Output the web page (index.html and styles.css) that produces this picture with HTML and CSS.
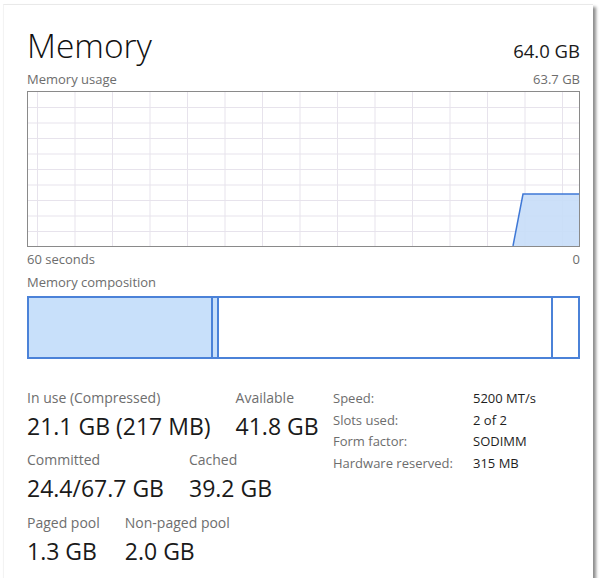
FILE: index.html
```html
<!DOCTYPE html>
<html lang="en">
<head>
<meta charset="utf-8">
<title>Memory</title>
<link rel="stylesheet" href="styles.css">
</head>
<body>
<div class="panel">
  <div class="head">
    <h1 class="title">Memory</h1>
    <div class="total">64.0 GB</div>
  </div>
  <div class="axis">
    <span>Memory usage</span>
    <span>63.7 GB</span>
  </div>
  <div class="graph">
    <svg class="grid" viewBox="0 0 551 154" width="551" height="154">
      <g stroke="#e7e3ec" stroke-width="1">
        <line x1="9.5" y1="0" x2="9.5" y2="154"/>
        <line x1="47" y1="0" x2="47" y2="154"/>
        <line x1="84.5" y1="0" x2="84.5" y2="154"/>
        <line x1="122" y1="0" x2="122" y2="154"/>
        <line x1="159.5" y1="0" x2="159.5" y2="154"/>
        <line x1="197" y1="0" x2="197" y2="154"/>
        <line x1="234.5" y1="0" x2="234.5" y2="154"/>
        <line x1="272" y1="0" x2="272" y2="154"/>
        <line x1="309.5" y1="0" x2="309.5" y2="154"/>
        <line x1="347" y1="0" x2="347" y2="154"/>
        <line x1="384.5" y1="0" x2="384.5" y2="154"/>
        <line x1="422" y1="0" x2="422" y2="154"/>
        <line x1="459.5" y1="0" x2="459.5" y2="154"/>
        <line x1="497" y1="0" x2="497" y2="154"/>
        <line x1="534.5" y1="0" x2="534.5" y2="154"/>
        <line x1="0" y1="15.5" x2="551" y2="15.5"/>
        <line x1="0" y1="31" x2="551" y2="31"/>
        <line x1="0" y1="46.5" x2="551" y2="46.5"/>
        <line x1="0" y1="62" x2="551" y2="62"/>
        <line x1="0" y1="77.5" x2="551" y2="77.5"/>
        <line x1="0" y1="93" x2="551" y2="93"/>
        <line x1="0" y1="108.5" x2="551" y2="108.5"/>
        <line x1="0" y1="124" x2="551" y2="124"/>
        <line x1="0" y1="139.5" x2="551" y2="139.5"/>
      </g>
      <path d="M485 154 L495 102 L551 102 L551 154 Z" fill="#c6ddf8" fill-opacity="0.9"/>
      <polyline points="485,154 495,102 551,102" fill="none" stroke="#3f78d6" stroke-width="1.5"/>
    </svg>
  </div>
  <div class="axis">
    <span>60 seconds</span>
    <span>0</span>
  </div>
  <div class="caption">Memory composition</div>
  <div class="comp">
    <div class="seg seg-inuse"></div>
    <div class="seg seg-modified"></div>
    <div class="seg seg-standby"></div>
    <div class="seg seg-free"></div>
  </div>
  <div class="stats">
    <div class="figures">
      <div class="row">
        <div class="stat"><div class="label">In use (Compressed)</div><div class="value">21.1 GB (217 MB)</div></div>
        <div class="stat"><div class="label">Available</div><div class="value">41.8 GB</div></div>
      </div>
      <div class="row">
        <div class="stat"><div class="label">Committed</div><div class="value">24.4/67.7 GB</div></div>
        <div class="stat"><div class="label">Cached</div><div class="value">39.2 GB</div></div>
      </div>
      <div class="row">
        <div class="stat"><div class="label">Paged pool</div><div class="value">1.3 GB</div></div>
        <div class="stat"><div class="label">Non-paged pool</div><div class="value">2.0 GB</div></div>
      </div>
    </div>
    <dl class="info">
      <dt>Speed:</dt><dd>5200 MT/s</dd>
      <dt>Slots used:</dt><dd>2 of 2</dd>
      <dt>Form factor:</dt><dd>SODIMM</dd>
      <dt>Hardware reserved:</dt><dd>315 MB</dd>
    </dl>
  </div>
</div>
</body>
</html>
```
FILE: styles.css
```css
* { box-sizing: border-box; }

html, body {
  margin: 0;
  padding: 0;
  background: #ffffff;
}

body {
  font-family: "Open Sans", "Noto Sans", "Liberation Sans", sans-serif;
  color: #1a1a1a;
}

.panel {
  margin: 4px 0 0 3px;
  width: 590px;
  height: 574px;
  background: #ffffff;
  border-top: 1px solid #e9e9e9;
  border-left: 1px solid #f3f3f3;
  box-shadow: 3px 3px 3px rgba(0, 0, 0, 0.45);
  padding: 19.5px 13px 0 23px;
}

.head {
  display: flex;
  justify-content: space-between;
  align-items: baseline;
  height: 40px;
}

.title {
  margin: 0;
  font-size: 33.5px;
  font-weight: 300;
  line-height: 40px;
  color: #111111;
}

.total {
  font-size: 18.5px;
  color: #1a1a1a;
}

.axis {
  display: flex;
  justify-content: space-between;
  font-size: 13px;
  line-height: 16px;
  color: #6d6d6d;
  margin-top: 6.5px;
}

.graph {
  margin-top: 4px;
  width: 553px;
  height: 156px;
  border: 1px solid #8a8a8a;
}

.grid {
  display: block;
}

.graph + .axis {
  margin-top: 4px;
}

.caption {
  font-size: 13px;
  line-height: 16px;
  color: #6d6d6d;
  margin-top: 7px;
}

.comp {
  margin-top: 6px;
  width: 553px;
  height: 63px;
  border: 2px solid #4b82d8;
  display: flex;
}

.seg {
  height: 100%;
  border-right: 2px solid #4b82d8;
}

.seg-inuse { width: 184px; background: #c8e0fa; }
.seg-modified { width: 6px; background: #c8e0fa; }
.seg-standby { width: 334px; background: #ffffff; }
.seg-free { flex: 1; border-right: 0; background: #ffffff; }

.stats {
  margin-top: 28px;
  display: flex;
}

.figures {
  width: 306px;
  padding-top: 1.6px;
  display: flex;
  flex-direction: column;
  row-gap: 11.5px;
}

.row {
  display: flex;
  column-gap: 25px;
}

.label {
  font-size: 14px;
  line-height: 18px;
  color: #6e6e6e;
}

.value {
  margin-top: 5px;
  font-size: 23px;
  line-height: 28px;
  color: #1a1a1a;
}

.info {
  margin: 0;
  display: grid;
  grid-template-columns: 140px auto;
  grid-auto-rows: 21.7px;
  align-items: center;
  font-size: 13px;
}

.info dt {
  color: #6d6d6d;
}

.info dd {
  margin: 0;
  color: #1e1e1e;
}
```
